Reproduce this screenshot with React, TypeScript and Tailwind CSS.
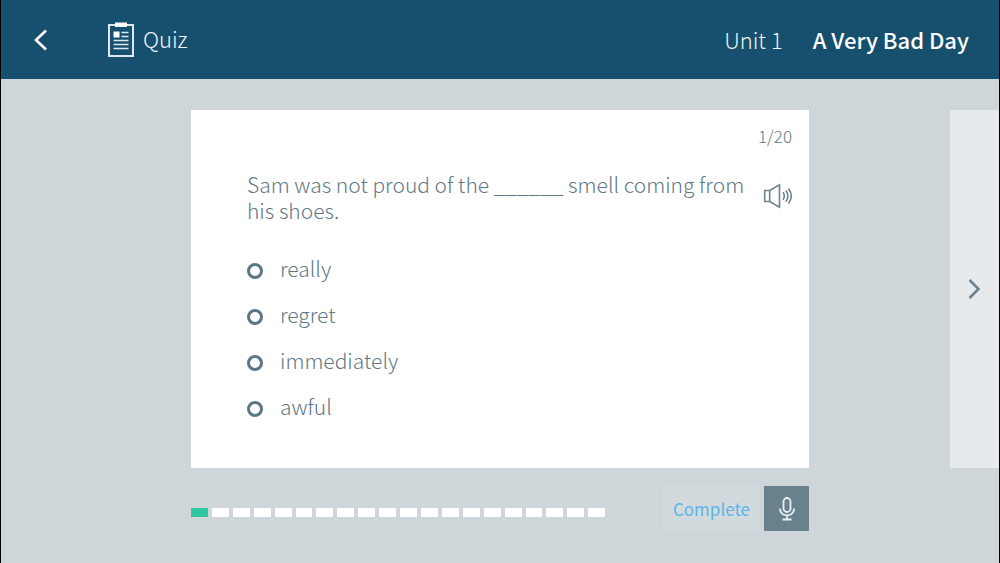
import { useState } from 'react';

const TOTAL = 20;
const OPTIONS = ['really', 'regret', 'immediately', 'awful'];

function QuizIcon() {
  return (
    <svg width="28" height="36" viewBox="0 0 28 36" fill="none" stroke="#dce9ef" aria-hidden="true">
      <path d="M2 3h24v31H2z" strokeWidth="2" />
      <path d="M8 .5h12V5H8z" fill="#fff" stroke="none" />
      <path d="M6.500 9.500h6v6h-6z" fill="#fff" stroke="none" />
      <path d="M14.500 10.500h7M14.500 14.500h7M6.500 18.500h15M6.500 22.500h15M6.500 26.500h15" strokeWidth="1.600" />
    </svg>
  );
}

function SpeakerIcon() {
  return (
    <svg width="30" height="26" viewBox="0 0 30 26" fill="none" stroke="#6b8390" strokeWidth="1.6" aria-hidden="true">
      <path d="M1.700 7.500h5v11h-5zM6.700 7.500 16.500 1.800v22.400L6.700 18.500" />
      <path d="M20 9.300q2.600 3.700 0 7.400M22.800 7.400q4.200 5.600 0 11.200M25.500 5.500q5.600 7.500 0 15" />
    </svg>
  );
}

function MicIcon() {
  return (
    <svg width="18" height="26" viewBox="0 0 18 26" fill="none" stroke="#e8eff2" strokeWidth="1.8" aria-hidden="true">
      <rect x="5.500" y="2" width="7" height="14" rx="3.500" />
      <path d="M2 12.500v.7a7 6.200 0 0 0 14 0v-.7M9 19.500v3.500M4.500 23.500h9" />
    </svg>
  );
}

export default function App() {
  const [current, setCurrent] = useState(1);
  const [answer, setAnswer] = useState('');

  const handleNext = () => {
    setCurrent((n) => Math.min(n + 1, TOTAL));
    setAnswer('');
  };

  return (
    <div className="min-h-screen border-x border-black bg-[#ced6d9] font-['Noto_Sans_CJK_SC',sans-serif] text-[#5f7885]">
      <header className="flex h-[79px] items-center bg-[#17506f] pr-[30px] pl-8 text-[22px] text-[#eef5f8]">
        <button type="button" aria-label="Back" className="mr-[59px]">
          <svg width="15" height="22" viewBox="0 0 15 22" fill="none" stroke="#fff" strokeWidth="2.6" aria-hidden="true">
            <path d="M13 1.500 3 11l10 9.500" />
          </svg>
        </button>
        <div className="flex items-center gap-2 pt-px">
          <QuizIcon />
          <h1 className="pb-1 font-light">Quiz</h1>
        </div>
        <div className="ml-auto flex gap-[30px] pb-px">
          <p className="font-light">Unit 1</p>
          <p className="font-medium text-white">A Very Bad Day</p>
        </div>
      </header>

      <main className="grid grid-cols-[1fr_minmax(0,618px)_1fr] pt-[31px]">
        <section className="col-start-2 min-h-[358px] bg-white pr-[17px] pb-9 pl-14 font-light">
          <p className="pt-[14px] text-right text-[17px] leading-6">
            {current}/{TOTAL}
          </p>
          <div className="mt-[23px] flex items-start justify-between">
            <h2 id="question" className="w-[505px] text-[21px] leading-[26px]">
              Sam was not proud of the ______ smell coming from his shoes.
            </h2>
            <button type="button" aria-label="Listen" className="-mr-px pt-3">
              <SpeakerIcon />
            </button>
          </div>
          <div role="radiogroup" aria-labelledby="question" className="mt-[25px]">
            {OPTIONS.map((option) => (
              <label key={option} className="flex h-[46px] items-center gap-[17px] text-[21px]">
                <input
                  type="radio"
                  name="answer"
                  value={option}
                  checked={answer === option}
                  onChange={() => setAnswer(option)}
                  className="size-4 appearance-none rounded-full border-3 border-[#5b7684] checked:bg-[#2fc7a0]"
                />
                <span className="pb-1">{option}</span>
              </label>
            ))}
          </div>
        </section>

        <button
          type="button"
          aria-label="Next question"
          onClick={handleNext}
          className="col-start-3 flex w-[49px] items-center justify-center justify-self-end bg-[#e6eaed]"
        >
          <svg width="14" height="20" viewBox="0 0 14 20" fill="none" stroke="#6b8390" strokeWidth="2.600" aria-hidden="true">
            <path d="m1.500 1 9 9-9 9" />
          </svg>
        </button>

        <footer className="col-start-2 mt-[18px] flex items-center">
          <div className="mt-2 flex w-[414px] gap-1" aria-label="Progress">
            {Array.from({ length: TOTAL }, (_, i) => (
              <span key={i} className={i < current ? 'h-[9px] flex-1 bg-[#2fc7a0]' : 'h-[9px] flex-1 bg-white'} />
            ))}
          </div>
          <button type="button" className="ml-auto h-[45px] w-[97px] bg-[#d3dadd] text-[17px] text-[#5cb5e6]">
            Complete
          </button>
          <button
            type="button"
            aria-label="Record"
            className="ml-1 flex size-[45px] items-center justify-center bg-[#68818d]"
          >
            <MicIcon />
          </button>
        </footer>
      </main>
    </div>
  );
}
